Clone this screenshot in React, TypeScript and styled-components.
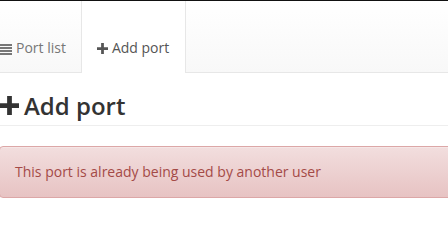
import React from "react";
import styled, { createGlobalStyle } from "styled-components";

const GlobalStyle = createGlobalStyle`
  html, body {
    margin: 0;
    padding: 0;
    overflow: hidden;
    background: #fff;
  }
  body {
    font-family: "Open Sans", "Liberation Sans", sans-serif;
    font-size: 14px;
    line-height: 20px;
    color: #333;
  }
`;

const Page = styled.div`
  width: 480px;
  border-top: 1px solid #111;
`;

const Navbar = styled.nav`
  display: flex;
  height: 71px;
  background: linear-gradient(to bottom, #fff 0, #f8f8f8 100%);
  border-bottom: 1px solid #e7e7e7;
`;

const NavList = styled.ul`
  display: flex;
  list-style: none;
  margin: 0 0 0 -16px;
  padding: 0;
`;

const NavItem = styled.li<{ $active?: boolean }>`
  display: flex;
  align-items: flex-start;
  padding: 37px ${(p) => (p.$active ? 16 : 14)}px 14px 15px;
  color: ${(p) => (p.$active ? "#555" : "#777")};
  background: ${(p) => (p.$active ? "#fff" : "transparent")};
  border-left: 1px solid ${(p) => (p.$active ? "#e7e7e7" : "transparent")};
  border-right: 1px solid ${(p) => (p.$active ? "#e7e7e7" : "transparent")};
  margin-bottom: -1px;
  gap: 4px;
`;

const Icon = styled.svg<{ $size: number }>`
  width: ${(p) => p.$size}px;
  height: ${(p) => p.$size}px;
  flex: none;
  align-self: center;
  fill: currentColor;
`;

const Content = styled.main`
  padding: 0;
`;

const PageHeader = styled.h1`
  display: flex;
  align-items: center;
  gap: 5px;
  margin: 18px 0 20px;
  padding-bottom: 5px;
  border-bottom: 1px solid #eee;
  font-size: 24px;
  font-weight: 600;
  line-height: 29px;
  color: #333;
`;

const Alert = styled.div`
  margin-left: -1px;
  padding: 15px;
  border: 1px solid #dca7a7;
  border-radius: 4px;
  background: linear-gradient(to bottom, #f2dede 0, #e7c3c3 100%);
  color: #a44a47;
  box-shadow: inset 0 1px 0 rgba(255, 255, 255, 0.25), 0 1px 2px rgba(0, 0, 0, 0.05);
`;

const ListIcon = () => (
  <Icon $size={12} viewBox="0 0 12 12">
    <rect x="0" y="1" width="12" height="2" />
    <rect x="0" y="4" width="12" height="2" />
    <rect x="0" y="7" width="12" height="2" />
    <rect x="0" y="10" width="12" height="2" />
  </Icon>
);

const PlusIcon = ({ size }: { size: number }) => (
  <Icon $size={size} viewBox="0 0 12 12">
    <path d="M4.5 0h3v4.5H12v3H7.5V12h-3V7.5H0v-3h4.5z" />
  </Icon>
);

export default function App() {
  return (
    <>
      <GlobalStyle />
      <Page>
        <Navbar>
          <NavList>
            <NavItem>
              <ListIcon />
              Port list
            </NavItem>
            <NavItem $active>
              <PlusIcon size={11} />
              Add port
            </NavItem>
          </NavList>
        </Navbar>
        <Content>
          <PageHeader>
            <PlusIcon size={19} />
            Add port
          </PageHeader>
          <Alert>This port is already being used by another user</Alert>
        </Content>
      </Page>
    </>
  );
}
